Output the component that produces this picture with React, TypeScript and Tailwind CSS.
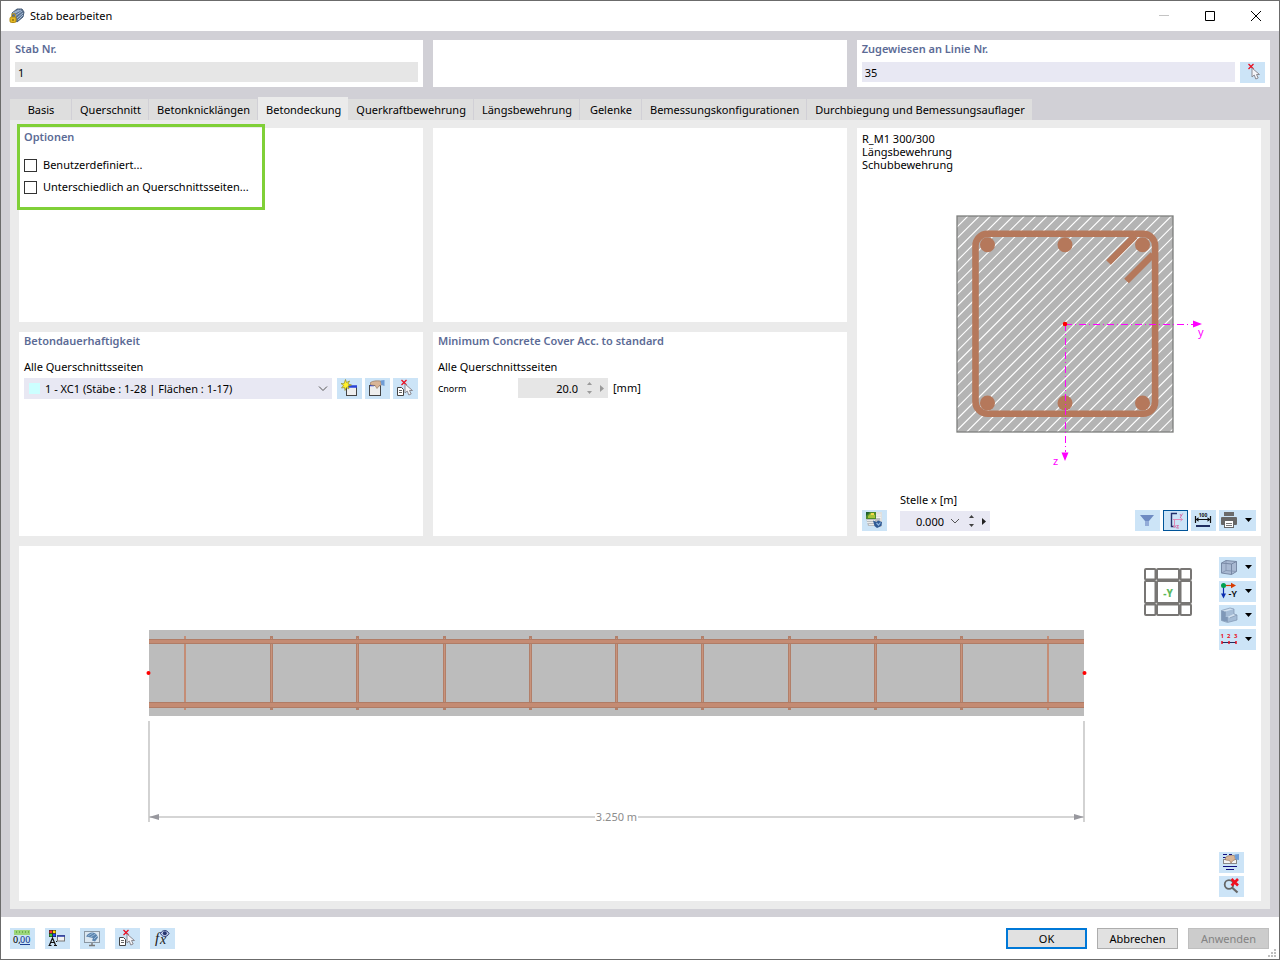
import { clsx } from "clsx";
import { useState, type ReactNode } from "react";

const tabs = [
	"Basis",
	"Querschnitt",
	"Betonknicklängen",
	"Betondeckung",
	"Querkraftbewehrung",
	"Längsbewehrung",
	"Gelenke",
	"Bemessungskonfigurationen",
	"Durchbiegung und Bemessungsauflager",
];

const stirrups = [166, 252, 338, 425, 511, 597, 683, 770, 856, 942, 1029];

// 45° hatch over the 216 x 216 section
const hatch = Array.from({ length: 39 }, (_, i) => `M${966.7 + (i - 20) * 11.3} 432l216 -216`).join("");

function Panel({
	title,
	className,
	children,
}: {
	title?: string;
	className?: string;
	children?: ReactNode;
}) {
	return (
		<section className={clsx("bg-white px-[5px]", className)}>
			{title && (
				<h2 className="h-[18px] leading-[18px] font-semibold text-[#5c6b96]">
					{title}
				</h2>
			)}
			{children}
		</section>
	);
}

function ToolButton({
	label,
	menu,
	active,
	children,
}: {
	label: string;
	menu?: boolean;
	active?: boolean;
	children: ReactNode;
}) {
	return (
		<button
			type="button"
			aria-label={label}
			className={clsx(
				"relative flex h-[21px] shrink-0 items-center bg-[#cce4f7]",
				menu ? "w-[37px]" : "w-[25px]",
				active && "outline outline-1 -outline-offset-1 outline-[#005499]",
			)}
		>
			<svg width="25" height="21" viewBox="0 0 25 21" fill="none" className="shrink-0">
				{children}
			</svg>
			{menu && (
				<svg width="12" height="21" viewBox="0 0 12 21" className="shrink-0">
					<path d="M1 8h7l-3.500 4z" fill="#000" />
				</svg>
			)}
		</button>
	);
}

function Cursor() {
	return (
		<path
			d="M12 6v9l2.200-2 1.600 4 2.400-1-1.700-3.500h3z"
			fill="#f4f4f8"
			stroke="#8b8b93"
		/>
	);
}

function RedCross() {
	return <path d="M8.500 2l5 5M13.500 2l-5 5" stroke="#e81123" strokeWidth="1.300" />;
}

function PickIcon() {
	return (
		<>
			<RedCross />
			<Cursor />
		</>
	);
}

function PickListIcon() {
	return (
		<>
			<path d="M4.500 9.500h4l2 2v6h-6z" fill="#fff" stroke="#444" />
			<path d="M6 12.500h3M6 14.500h3" stroke="#666" />
			<PickIcon />
		</>
	);
}

function Spinner({ disabled }: { disabled?: boolean }) {
	const color = disabled ? "#9a9a9a" : "#404040";
	return (
		<>
			<span className="flex w-3 flex-col">
				<button type="button" aria-label="Erhöhen" disabled={disabled} className="h-[10px]">
					<svg width="12" height="10" viewBox="0 0 12 10">
						<path d="M3 7h5L5.500 4z" fill={color} />
					</svg>
				</button>
				<button type="button" aria-label="Verringern" disabled={disabled} className="h-[10px]">
					<svg width="12" height="10" viewBox="0 0 12 10">
						<path d="M3 3h5L5.500 6z" fill={color} />
					</svg>
				</button>
			</span>
			<button type="button" aria-label="Weitere" disabled={disabled} className="w-3">
				<svg width="12" height="20" viewBox="0 0 12 20">
					<path d="M4 7v7l4-3.500z" fill={disabled ? "#9a9a9a" : "#222"} />
				</svg>
			</button>
		</>
	);
}

function CrossSection() {
	return (
		<svg width="292" height="270" viewBox="913 205 292 270" fill="none" className="mx-auto mt-[34px]">
			<clipPath id="section">
				<rect x="957" y="216" width="216" height="216" />
			</clipPath>
			<rect x="957" y="216" width="216" height="216" fill="#b4b4b4" />
			<path d={hatch} stroke="#fff" strokeWidth="1.100" clipPath="url(#section)" />
			<rect x="957" y="216" width="216" height="216" stroke="#7d7f7d" strokeWidth="1.300" />
			<g stroke="#b5785b" strokeWidth="6.600">
				<rect x="975.500" y="233.800" width="179.600" height="180" rx="12" />
				<path d="M1135 236l-26.500 26.500M1153 254.500l-26.500 26.500" />
			</g>
			<g fill="#b5785b">
				{[987.5, 1065, 1142.5].map((x) => (
					<g key={x}>
						<circle cx={x} cy="244.700" r="7.500" />
						<circle cx={x} cy="403" r="7.500" />
					</g>
				))}
			</g>
			<path d="M1065 324.500h128M1065.500 324v128" stroke="#f0f" strokeDasharray="7 3 1 3" />
			<path d="M1193 320.500v7l9-3.500zM1061.500 452.500h7l-3.500 8.500z" fill="#f0f" />
			<circle cx="1065" cy="324" r="2.300" fill="red" />
			<text x="1198" y="336" fontSize="11" fill="#f0f">y</text>
			<text x="1053" y="465" fontSize="11" fill="#f0f">z</text>
		</svg>
	);
}

function BeamView() {
	return (
		<svg viewBox="0 0 1195 355" fill="none" className="h-full w-full">
			<rect x="130" y="84" width="935" height="86" fill="#bcbcbc" />
			{stirrups.map((x, i) => {
				const edge = i === 0 || i === stirrups.length - 1;
				return (
					<g key={x}>
						<rect x={x - 1} y="90" width={edge ? 2 : 3} height="74" fill={edge ? "#c48d76" : "#b27f69"} />
						{!edge && <rect x={x} y="92" width="1" height="70" fill="#c8937c" />}
					</g>
				);
			})}
			{[93, 156].map((y) => (
				<g key={y}>
					<rect x="130" y={y} width="935" height={y === 93 ? 5 : 6} fill="#b07c66" />
					<rect x="130" y={y + 1} width="935" height={y === 93 ? 3 : 4} fill="#c48b73" />
				</g>
			))}
			<circle cx="129.500" cy="127" r="2" fill="red" />
			<circle cx="1065.500" cy="127" r="2" fill="red" />
			<path d="M130 175v101M1065 175v101M130 271h446M619 271h446" stroke="#c8c8c8" strokeWidth="1.600" />
			<path d="M130 271l10-3v6zM1065 271l-10-3v6z" fill="#98989e" />
			<text x="597.500" y="275" textAnchor="middle" fontSize="11" fill="#8c8c8c">
				3.250 m
			</text>
		</svg>
	);
}

function ViewCube() {
	const cells = [
		{ at: 1, size: 10.5 },
		{ at: 13, size: 22 },
		{ at: 36.5, size: 10.5 },
	];
	return (
		<svg width="48" height="48" viewBox="0 0 48 48" fill="none" className="absolute top-[22px] right-[69px]">
			{cells.map((row) =>
				cells.map((col) => (
					<rect
						key={`${row.at}-${col.at}`}
						x={col.at}
						y={row.at}
						width={col.size}
						height={row.size}
						rx="1"
						stroke="#787674"
						strokeWidth="2"
					/>
				)),
			)}
			<text x="24" y="29" textAnchor="middle" fontSize="10" fontWeight="800" fill="#5cb85c">
				-Y
			</text>
		</svg>
	);
}

function SectionTools() {
	return (
		<div className="mt-auto flex items-end pb-[5px]">
			<ToolButton label="Darstellung">
				<path d="M11 2h9v15h-4l-4-6z" fill="#e0e0de" />
				<path d="M4 8h14v8H6z" fill="#b9bdc1" />
				<path d="M5 10.500h8M5 12.500h8M7 14.500h6M13 5h6M13 7.500h6" stroke="#f5f5f5" strokeWidth=".800" />
				<rect x="4" y="2" width="10" height="7" fill="#4d8a2c" />
				<path d="M4 2h4l-4 4z" fill="#1f5e30" />
				<path d="M6 6l3-3 4 2v3H6z" fill="#a6c43a" />
				<rect x="9" y="3" width="3" height="2" fill="#f3d94b" />
				<path d="M11 10.500l3.500 1.500 1.500-1.500 4 1.500-.500 4-4.500 2-2.500-2z" fill="#2f5a94" />
				<path d="M14.500 13l2 2 2-2.500" stroke="#8fb6e0" strokeWidth="1.200" />
			</ToolButton>
			<div className="ml-[13px] flex flex-col gap-[3px]">
				<label htmlFor="location" className="leading-4">
					Stelle x [m]
				</label>
				<div className="flex h-5 w-[90px] bg-[#e8e8f3]">
					<input id="location" defaultValue="0.000" className="w-11 bg-transparent pt-px text-right outline-none" />
					<button type="button" aria-label="Stellen anzeigen" className="w-[22px]">
						<svg width="22" height="20" viewBox="0 0 22 20" fill="none">
							<path d="M7 8l4 4 4-4" stroke="#555" />
						</svg>
					</button>
					<Spinner />
				</div>
			</div>
			<div className="ml-auto flex gap-[3px]">
				<ToolButton label="Filter">
					<path d="M5 5h14l-5 6v5h-4v-5z" fill="#6f8bc2" />
					<path d="M10 11h4v5h-4z" fill="#93acd8" />
				</ToolButton>
				<ToolButton label="Achsen" active>
					<path d="M14 3.500H8.500v13h4" stroke="#23306b" strokeWidth="1.400" />
					<path d="M11.500 9.500h8M11.500 9.500v8M10 9.500h3M17.500 8l2 1.500-2 1.500M10 15.500l1.500 2 1.500-2" stroke="#e08ab8" />
					<path d="M17 4l1.200 2 1.500-2.500M18.200 6l-1 2M13.500 15.500h2l-2 2.500h2.500" stroke="#d6589b" strokeWidth=".800" />
				</ToolButton>
				<ToolButton label="Maße">
					<path d="M4.500 6v7M19.500 6v7M4.500 9.500h15" stroke="#111" strokeWidth="1.200" />
					<path d="M4.500 9.500l3-2.200v4.400zM19.500 9.500l-3-2.200v4.400z" fill="#111" />
					<path d="M5 16h14" stroke="#1f2d5f" strokeWidth="2" />
					<text x="12" y="7" textAnchor="middle" fontSize="5" fontWeight="700" fill="#111">100</text>
				</ToolButton>
				<ToolButton label="Drucken" menu>
					<rect x="5" y="2" width="10" height="4" fill="#6b6b6b" />
					<rect x="2" y="7" width="16" height="8" rx="1" fill="#666" />
					<rect x="5.500" y="10.500" width="9" height="7" fill="#fff" stroke="#666" />
					<path d="M7 13.500h6M7 15.500h6" stroke="#777" />
				</ToolButton>
			</div>
		</div>
	);
}

function ViewTools() {
	return (
		<div className="flex w-[47px] shrink-0 flex-col items-start justify-between px-[5px] pt-[11px] pb-1">
			<div className="flex flex-col gap-[3px]">
				<ToolButton label="Darstellungsart" menu>
					<path d="M2.500 6L7 3.500l10.500 1v10l-5 3-10-1.500z" fill="#a9b9d2" />
					<path d="M2.500 6l10 1v10.500l-10-1.500zM2.500 6L7 3.500l10.500 1-5 2.500M17.500 4.500v10l-5 3" stroke="#72829e" strokeWidth=".900" />
					<path d="M7 3.500v10l10.500 1M7 13.500L2.500 16" stroke="#8090ac" strokeWidth=".800" />
				</ToolButton>
				<ToolButton label="Blickrichtung" menu>
					<path d="M4.500 4.500h9" stroke="#d83b01" strokeWidth="1.200" />
					<path d="M12 1.800v5.400l5-2.700z" fill="#d83b01" />
					<path d="M4.500 4.500v9" stroke="#0c2fb0" strokeWidth="1.200" />
					<path d="M2 12.500h5l-2.500 5z" fill="#0c2fb0" />
					<circle cx="4.500" cy="4.500" r="2.500" fill="#00a050" />
					<text x="9.500" y="16" fontSize="9" fontWeight="600" fill="#000">-Y</text>
				</ToolButton>
				<ToolButton label="Sichtbarkeit" menu>
					<path d="M2.500 5.500l4 1v5l-4-1zM2.500 10.500l6 1.500v5l-6-1.500z" fill="#7f98b8" />
					<path d="M2.500 5.500L11 3l4 1-8.500 2.500z" fill="#d3e1ef" />
					<path d="M6.500 6.500L15 4v5l-6.500 3-2-.500z" fill="#a5bcd6" />
					<path d="M8.500 12L15 9l3 1v5l-9.500 2.500z" fill="#a5bcd6" />
					<path d="M8.500 12L15 9l3 1-7 2.800z" fill="#d3e1ef" />
					<path d="M2.500 5.500L11 3l4 1v5l3 1v5l-9.500 2.500-6-2zM8.500 12v5M6.500 6.500v5M11 12.800l7-2.800" stroke="#7e94b0" strokeWidth=".700" />
				</ToolButton>
				<ToolButton label="Nummerierung" menu>
					<path d="M3 13.500h14" stroke="#1f2d5f" />
					<path d="M3 12v3M10 12v3M17 12v3" stroke="#e81123" strokeWidth="1.500" />
					<g fontSize="6" fontWeight="700" fill="#e81123">
						<text x="1.500" y="9">1</text>
						<text x="8" y="9">2</text>
						<text x="15" y="9">3</text>
					</g>
				</ToolButton>
			</div>
			<div className="flex flex-col gap-[3px]">
				<ToolButton label="Einstellungen bearbeiten">
					<path d="M4 2.500h4M10 2.500h3M4 5.500h3M4 14.500h14M7 17.500h8" stroke="#101080" />
					<rect x="4.500" y="7.500" width="13" height="4" fill="#f4f4f4" stroke="#888" />
					<path d="M6.500 5.500c2-2 5-2.500 9-2l1 4-2.500 1-2 2.500-1.500-2.500-4-.500z" fill="#d9b597" stroke="#8d7059" strokeWidth=".600" />
					<path d="M15.500 2.500l4.500-.500v6l-3.500-.500z" fill="#6f9dd6" />
				</ToolButton>
				<ToolButton label="Ansicht zurücksetzen">
					<circle cx="10" cy="8.500" r="4.300" stroke="#666" strokeWidth="1.800" />
					<path d="M13 11.500l5.500 5" stroke="#666" strokeWidth="2.200" />
					<path d="M12.500 3l6.500 6.500M19 3l-6.500 6.500" stroke="#f01020" strokeWidth="2.600" />
				</ToolButton>
			</div>
		</div>
	);
}

function Footer() {
	return (
		<footer className="relative flex h-[42px] shrink-0 items-center bg-white pr-[10px] pl-[9px]">
			<div className="flex gap-[10px]">
				<ToolButton label="Einheiten">
					<rect x="4" y="2" width="16" height="5" fill="#9bd67a" />
					<path d="M6.500 3v2M9.500 3v2M12.500 3v2M15.500 3v2M18.500 3v2" stroke="#6fae50" />
					<text x="3" y="15" fontSize="9" fontWeight="500" fill="#111">0,</text>
					<text x="10" y="15" fontSize="9" fontWeight="500" fill="#1c3f94">00</text>
					<path d="M10 16.500h10" stroke="#1c3f94" />
				</ToolButton>
				<ToolButton label="Anzeigeeigenschaften">
					<rect x="4" y="2" width="7" height="7" fill="#222" />
					<rect x="4.500" y="2.500" width="2.700" height="2.700" fill="#f33" />
					<rect x="7.900" y="2.500" width="2.700" height="2.700" fill="#fd0" />
					<rect x="4.500" y="5.800" width="2.700" height="2.700" fill="#3c3" />
					<rect x="7.900" y="5.800" width="2.700" height="2.700" fill="#24f" />
					<path d="M4.500 17L7.500 10l3 7M5.500 14.500h4M3.500 17.500h3M9 17.500h3M11 13.500h1" stroke="#111" strokeWidth="1.200" />
					<rect x="12.500" y="7.500" width="7" height="5.500" fill="#f2f2f2" stroke="#777" />
					<path d="M12 8h8" stroke="#2438a8" strokeWidth="1.500" />
				</ToolButton>
				<ToolButton label="Ansicht">
					<rect x="4.500" y="3.500" width="15" height="11" fill="#dbe7f1" stroke="#8a97a3" />
					<path d="M6 8.500c2-3 4-4 6-4s5 1 6 5l-3 4-3-1 1-2.500z" fill="#5a83ae" />
					<path d="M8 8l5-3M10.500 9l5-3M14 11l3-3" stroke="#a5c4e0" strokeWidth=".800" />
					<path d="M12 15v2M9 17.500h6" stroke="#777" strokeWidth="1.400" />
				</ToolButton>
				<ToolButton label="Objekt wählen">
					<PickListIcon />
				</ToolButton>
				<ToolButton label="Formel">
					<text x="5" y="15" fontSize="15" fontStyle="italic" className="font-['Liberation_Serif',serif]" fill="#222">
						f
					</text>
					<text x="10" y="16" fontSize="14" fontStyle="italic" className="font-['Liberation_Serif',serif]" fill="#222">
						x
					</text>
					<path d="M10.500 5.500c2-4 6.500-4 8.500 0-2 4-6.500 4-8.500 0z" fill="#c8d4f0" stroke="#26356f" />
					<circle cx="14.800" cy="5.300" r="2" fill="#26356f" />
				</ToolButton>
			</div>
			<div className="ml-auto flex gap-[10px]">
				<button type="button" className="h-[21px] w-[81px] border-2 border-[#0078d7] bg-[#e1e1e1] pt-px leading-4">
					OK
				</button>
				<button type="button" className="h-[21px] w-[81px] border border-[#adadad] bg-[#e1e1e1] pt-[2px] leading-4">
					Abbrechen
				</button>
				<button type="button" disabled className="h-[21px] w-[81px] border border-[#bfbfbf] bg-[#cccccc] pt-[2px] leading-4 text-[#838383]">
					Anwenden
				</button>
			</div>
			<svg width="9" height="9" viewBox="0 0 9 9" fill="#bfbfbf" className="absolute right-[2px] bottom-[1px]">
				<path d="M6 0h2v2h-2zM3 3h2v2h-2zM6 3h2v2h-2zM0 6h2v2h-2zM3 6h2v2h-2zM6 6h2v2h-2z" />
			</svg>
		</footer>
	);
}

export default function App() {
	const [activeTab, setActiveTab] = useState("Betondeckung");

	return (
		<div className="flex min-h-screen flex-col border border-[#6b6b6b] bg-[#d1d0d6] font-['Noto_Sans','Open_Sans',sans-serif] text-[11px] leading-4 text-black">
			<header className="flex h-[30px] shrink-0 items-center bg-white pl-2">
				<svg width="16" height="16" viewBox="0 0 16 16" fill="none">
					<path d="M3 5l5-4h5l2 3-1 5-6 5-4-3z" fill="#5c7391" stroke="#4a5f7a" />
					<path d="M4 5l6-3M6 5l6-3M6 8l7-5M8 10l6-5M9 12l5-5" stroke="#a9bed8" />
					<rect x="1" y="9" width="6" height="5.500" rx="1.500" fill="#e5b822" stroke="#b08a14" />
					<path d="M2.500 9V7.500a2 2 0 014 0V9" stroke="#c99c15" />
					<path d="M4 11v2" stroke="#6b5208" />
				</svg>
				<h1 className="ml-[5px]">Stab bearbeiten</h1>
				<div className="ml-auto flex h-full">
					<button type="button" aria-label="Minimieren" disabled className="flex w-[46px] items-center justify-center">
						<svg width="11" height="11" viewBox="0 0 11 11">
							<path d="M0 4.500h10" stroke="#c4c4c4" />
						</svg>
					</button>
					<button type="button" aria-label="Maximieren" className="flex w-[46px] items-center justify-center">
						<svg width="11" height="11" viewBox="0 0 11 11" fill="none">
							<path d="M.500 .500h9v9h-9z" stroke="#000" />
						</svg>
					</button>
					<button type="button" aria-label="Schließen" className="flex w-[46px] items-center justify-center">
						<svg width="11" height="11" viewBox="0 0 11 11" fill="none">
							<path d="M0 0l10 10M10 0L0 10" stroke="#000" />
						</svg>
					</button>
				</div>
			</header>

			<main className="flex flex-1 flex-col px-[9px] pt-[9px] pb-2">
				<div className="grid grid-cols-3 gap-[10px]">
					<Panel className="pb-[5px]">
						<label htmlFor="member" className="block h-[22px] leading-[18px] font-semibold text-[#5c6b96]">
							Stab Nr.
						</label>
						<input id="member" readOnly defaultValue="1" className="block h-5 w-full bg-[#e6e6e6] px-[3px] pt-px outline-none" />
					</Panel>
					<Panel />
					<Panel className="pb-[5px]">
						<label htmlFor="line" className="block h-[22px] leading-[18px] font-semibold text-[#5c6b96]">
							Zugewiesen an Linie Nr.
						</label>
						<div className="flex h-5 gap-[5px]">
							<input id="line" defaultValue="35" className="min-w-0 flex-1 bg-[#e8e8f3] px-[3px] pt-px outline-none" />
							<ToolButton label="Linie wählen">
								<PickIcon />
							</ToolButton>
						</div>
					</Panel>
				</div>

				<div role="tablist" className="mt-[10px] flex h-[23px] items-end">
					{tabs.map((tab) => (
						<button
							key={tab}
							type="button"
							role="tab"
							aria-selected={tab === activeTab}
							onClick={() => setActiveTab(tab)}
							className={clsx(
								"min-w-[62px] pr-[7px] pl-2 whitespace-nowrap",
								tab === "Gelenke" && "min-w-0",
								tab === activeTab
									? "h-[23px] bg-[#ebebeb] pt-[2px]"
									: "h-[21px] border-r border-[#d1d0d6] bg-[#dedede]",
							)}
						>
							{tab}
						</button>
					))}
				</div>

				<div className="flex flex-1 flex-col gap-[10px] bg-[#ebebeb] px-[9px] py-2">
					<div className="grid grid-cols-[404fr_414fr_404fr] grid-rows-[194px_204px] gap-[10px]">
						<Panel title="Optionen" className="relative">
							<div className="mt-2 flex flex-col">
								{["Benutzerdefiniert...", "Unterschiedlich an Querschnittsseiten..."].map((option) => (
									<label key={option} className="flex h-[22px] items-center gap-[6px]">
										<input type="checkbox" className="size-[13px] appearance-none border border-[#333] bg-white checked:bg-[#333]" />
										{option}
									</label>
								))}
							</div>
							<div className="pointer-events-none absolute -top-1 -left-[2px] h-[86px] w-[248px] border-3 border-[#80d038]" />
						</Panel>
						<Panel />
						<Panel className="row-span-2 flex flex-col pt-1">
							<p className="leading-[13px]">
								R_M1 300/300
								<br />
								Längsbewehrung
								<br />
								Schubbewehrung
							</p>
							<CrossSection />
							<SectionTools />
						</Panel>
						<Panel title="Betondauerhaftigkeit">
							<label htmlFor="durability" className="mt-[9px] block h-[19px]">
								Alle Querschnittsseiten
							</label>
							<div className="flex gap-[3px]">
								<div className="relative mr-[2px] h-[21px] flex-1">
									<select id="durability" className="h-full w-full appearance-none bg-[#e8e8f3] pl-[21px] outline-none">
										<option>1 - XC1 (Stäbe : 1-28 | Flächen : 1-17)</option>
									</select>
									<span className="pointer-events-none absolute top-[5px] left-[5px] size-[11px] bg-[#ccffff]" />
									<svg width="10" height="6" viewBox="0 0 10 6" fill="none" className="pointer-events-none absolute top-[8px] right-[4px]">
										<path d="M1 .500l4 4 4-4" stroke="#555" />
									</svg>
								</div>
								<ToolButton label="Neu">
									<rect x="9.500" y="8.500" width="10" height="9" fill="#eee" stroke="#444" />
									<path d="M9 8.500h11" stroke="#2a44d8" strokeWidth="2.500" />
									<path d="M8.500 1.500l1 3 3-1.500-1.500 3 3.500 1-3.500 1 1 3-2.500-1.500-1.500 3-.500-3-3 .500 2-2.500-2.500-2 3 .200z" fill="#fff02a" stroke="#8f8a2c" strokeWidth=".700" />
								</ToolButton>
								<ToolButton label="Bearbeiten">
									<rect x="4.500" y="7.500" width="11" height="10" fill="#eee" stroke="#444" />
									<path d="M5 7.500h4" stroke="#2a44d8" strokeWidth="1.500" />
									<path d="M5.500 4.500c2-1.500 6-2 10-1.500l1 4-2.500 1-2 2.500-2-3-4.500-.500z" fill="#d9b597" stroke="#8d7059" strokeWidth=".600" />
									<path d="M15.500 2.500l4-.500v6l-3-1z" fill="#6f9dd6" />
								</ToolButton>
								<ToolButton label="Auswählen">
									<PickListIcon />
								</ToolButton>
							</div>
						</Panel>
						<Panel title="Minimum Concrete Cover Acc. to standard">
							<p className="mt-[9px] h-[19px]">Alle Querschnittsseiten</p>
							<div className="flex h-5 items-center">
								<label htmlFor="cnorm" className="w-20 pt-px">
									c<span className="text-[9px]">norm</span>
								</label>
								<div className="flex h-5 w-[90px] bg-[#e6e6e6]">
									<input id="cnorm" disabled defaultValue="20.0" className="w-[60px] bg-transparent pt-px text-right outline-none" />
									<span className="w-[6px]" />
									<Spinner disabled />
								</div>
								<span className="ml-[5px]">[mm]</span>
							</div>
						</Panel>
					</div>

					<div className="relative flex min-h-[355px] flex-1 bg-white">
						<div className="min-w-0 flex-1">
							<BeamView />
						</div>
						<ViewCube />
						<ViewTools />
					</div>
				</div>
			</main>

			<Footer />
		</div>
	);
}
